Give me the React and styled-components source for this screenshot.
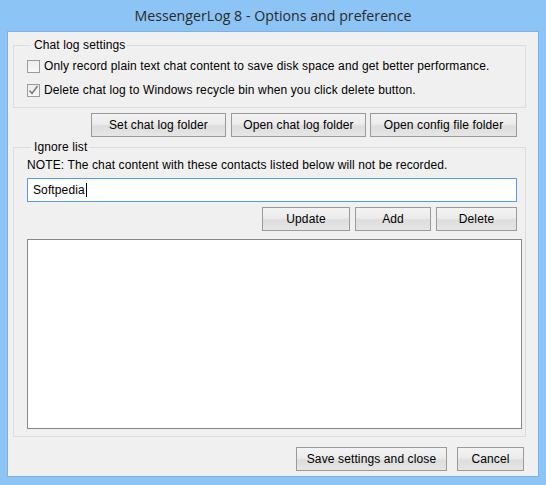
import React from "react"
import styled, { createGlobalStyle } from "styled-components"

const GlobalStyle = createGlobalStyle`
  html, body {
    margin: 0;
    padding: 0;
    background: #8cc4f5;
  }
  * {
    box-sizing: border-box;
  }
`

const Window = styled.div`
  width: 546px;
  height: 485px;
  background: #8cc4f5;
  padding: 0 7px 8px 7px;
  display: flex;
  flex-direction: column;
  font-family: "Liberation Sans", Arial, sans-serif;
  font-size: 12px;
  letter-spacing: 0.12px;
  color: #000;
`

const TitleBar = styled.div`
  height: 31px;
  display: flex;
  align-items: center;
  justify-content: center;
  font-family: "Open Sans", "Noto Sans", sans-serif;
  font-size: 14.2px;
  letter-spacing: 0;
  color: #2a2a2a;
  padding-bottom: 1px;
`

const Client = styled.div`
  flex: 1;
  background: #f0f0f0;
  border: 1px solid #7fb0df;
  padding: 6px 0 0 0;
  display: flex;
  flex-direction: column;
`

const GroupBox = styled.fieldset`
  margin: ${(p) => p.$top || 0}px 12px 0 5px;
  padding: ${(p) => p.$pad || "2px 0 5px 13px"};
  border: 1px solid #dcdcdc;
  min-width: 0;
`

const Legend = styled.legend`
  margin-left: 4px;
  padding: 0 2px 0 3px;
  line-height: 14px;
  font-size: 12px;
`

const CheckRow = styled.label`
  height: 24px;
  display: flex;
  align-items: center;
  gap: 4px;
`

const Box = styled.span`
  width: 13px;
  height: 13px;
  border: 1px solid #9b9b9b;
  background: linear-gradient(#ededed, #f8f8f8);
  display: flex;
  align-items: center;
  justify-content: center;
`

const ButtonRow = styled.div`
  display: flex;
  justify-content: flex-end;
  gap: ${(p) => p.$gap ?? 5}px;
  margin: ${(p) => p.$margin};
`

const Button = styled.button`
  width: ${(p) => p.$w}px;
  height: 24px;
  margin-left: ${(p) => p.$ml || 0}px;
  border: 1px solid #9a9a9a;
  background: linear-gradient(#f3f3f3 0%, #ececec 45%, #dddddd 55%, #e6e6e6 100%);
  font-family: "Liberation Sans", Arial, sans-serif;
  font-size: 12px;
  letter-spacing: 0.12px;
  color: #000;
  padding: 0;
`

const Note = styled.div`
  line-height: 14px;
  margin-bottom: 6px;
`

const TextInput = styled.div`
  width: 490px;
  height: 24px;
  border: 1px solid #569de5;
  background: #fff;
  display: flex;
  align-items: center;
  padding-left: 5px;
`

const Caret = styled.span`
  display: inline-block;
  width: 1px;
  height: 14px;
  background: #000;
  margin-left: 1px;
`

const ListBox = styled.div`
  width: 495px;
  height: 190px;
  margin-top: 8px;
  border: 1px solid #828790;
  background: #fff;
`

function Check({ checked }) {
  return (
    <Box>
      {checked && (
        <svg width="11" height="11" viewBox="0 0 11 11">
          <path d="M1.5 5.5 L4 8.5 L9.5 1" fill="none" stroke="#7d7d7d" strokeWidth="1.6" />
        </svg>
      )}
    </Box>
  )
}

export default function App() {
  return (
    <Window>
      <GlobalStyle />
      <TitleBar>MessengerLog 8 - Options and preference</TitleBar>
      <Client>
        <GroupBox>
          <Legend>Chat log settings</Legend>
          <CheckRow>
            <Check />
            Only record plain text chat content to save disk space and get better performance.
          </CheckRow>
          <CheckRow>
            <Check checked />
            Delete chat log to Windows recycle bin when you click delete button.
          </CheckRow>
        </GroupBox>
        <ButtonRow $margin="5px 21px 0 0" $gap={0}>
          <Button $w={135}>Set chat log folder</Button>
          <Button $w={135} $ml={5}>Open chat log folder</Button>
          <Button $w={147} $ml={4}>Open config file folder</Button>
        </ButtonRow>
        <GroupBox $top={3} $pad="4px 0 7px 13px">
          <Legend>Ignore list</Legend>
          <Note>NOTE: The chat content with these contacts listed below will not be recorded.</Note>
          <TextInput>
            Softpedia
            <Caret />
          </TextInput>
          <ButtonRow $margin="5px 8px 0 0">
            <Button $w={88}>Update</Button>
            <Button $w={76}>Add</Button>
            <Button $w={81}>Delete</Button>
          </ButtonRow>
          <ListBox />
        </GroupBox>
        <ButtonRow $margin="10px 14px 0 0" $gap={10}>
          <Button $w={151}>Save settings and close</Button>
          <Button $w={67}>Cancel</Button>
        </ButtonRow>
      </Client>
    </Window>
  )
}
